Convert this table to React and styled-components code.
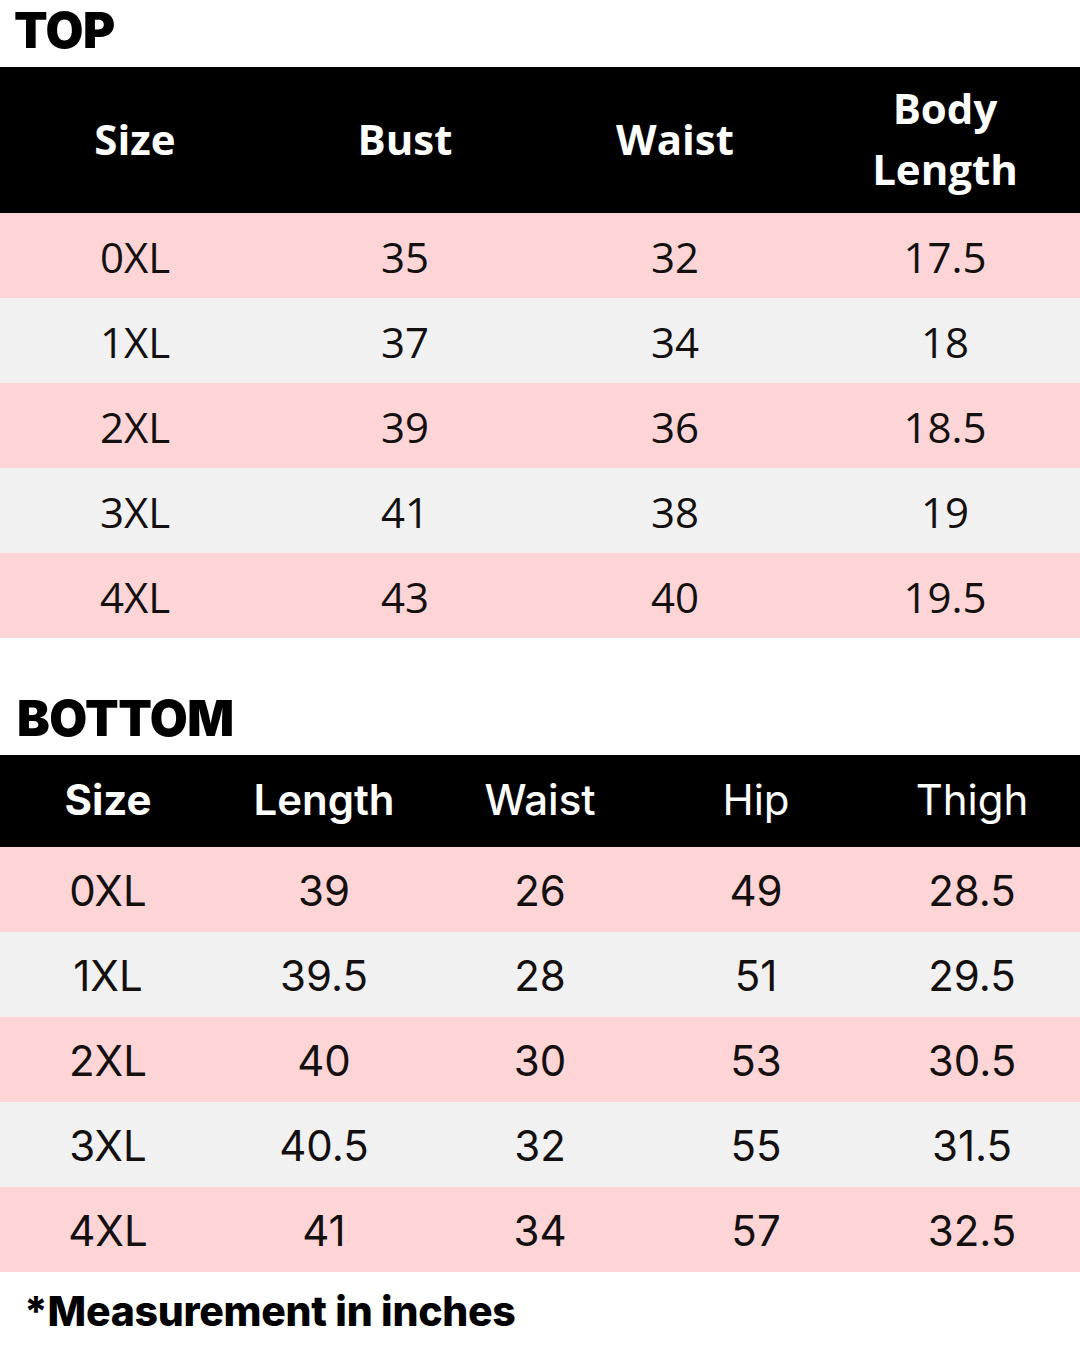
import React from 'react';
import styled, { createGlobalStyle } from 'styled-components';

const GlobalStyle = createGlobalStyle`
  html, body {
    margin: 0;
    padding: 0;
    background: #ffffff;
  }
  body {
    font-family: Inter, "Liberation Sans", sans-serif;
    color: #111111;
  }
`;

const Page = styled.div`
  width: 1080px;
  height: 1350px;
  display: flex;
  flex-direction: column;
  overflow: hidden;
  background: #ffffff;
`;

const Title = styled.h2`
  margin: 0;
  height: ${p => p.$height}px;
  display: flex;
  align-items: ${p => (p.$bottom ? 'flex-end' : 'center')};
  padding: ${p => (p.$bottom ? '0 0 12px 17px' : '0 0 6px 14px')};
  box-sizing: border-box;
  font-family: Inter, "Liberation Sans", sans-serif;
  font-weight: 900;
  font-size: 49px;
  letter-spacing: -0.5px;
  color: #000000;
  line-height: 1;
`;

const Table = styled.div`
  display: grid;
  grid-template-columns: repeat(${p => p.$cols}, 1fr);
  width: 1080px;
`;

const HeadCell = styled.div`
  background: #000000;
  color: #ffffff;
  height: ${p => p.$height}px;
  display: flex;
  align-items: center;
  justify-content: center;
  text-align: center;
  font-family: ${p => p.$font};
  font-weight: ${p => p.$weight || 700};
  font-size: ${p => p.$size}px;
  line-height: 1.45;
  padding-bottom: ${p => p.$lift || 0}px;
  box-sizing: border-box;
`;

const Cell = styled.div`
  background: ${p => (p.$odd ? '#f1f1f1' : '#fdd5d7')};
  height: 85px;
  display: flex;
  align-items: center;
  justify-content: center;
  font-family: ${p => p.$font};
  font-size: ${p => p.$size}px;
  font-weight: 400;
  color: #141010;
  padding-top: 2px;
  box-sizing: border-box;
`;

const Note = styled.div`
  flex: 1;
  display: flex;
  align-items: center;
  padding: 0 0 0 24px;
  font-family: Inter, "Liberation Sans", sans-serif;
  font-weight: 800;
  font-size: 41px;
  letter-spacing: -0.3px;
  color: #000000;
`;

const OPEN = '"Open Sans", "Liberation Sans", sans-serif';
const INTER = 'Inter, "Liberation Sans", sans-serif';

const topHead = ['Size', 'Bust', 'Waist', 'Body\nLength'];
const topRows = [
  ['0XL', '35', '32', '17.5'],
  ['1XL', '37', '34', '18'],
  ['2XL', '39', '36', '18.5'],
  ['3XL', '41', '38', '19'],
  ['4XL', '43', '40', '19.5'],
];

const bottomHead = [
  { label: 'Size', weight: 700 },
  { label: 'Length', weight: 600 },
  { label: 'Waist', weight: 500 },
  { label: 'Hip', weight: 400 },
  { label: 'Thigh', weight: 400 },
];
const bottomRows = [
  ['0XL', '39', '26', '49', '28.5'],
  ['1XL', '39.5', '28', '51', '29.5'],
  ['2XL', '40', '30', '53', '30.5'],
  ['3XL', '40.5', '32', '55', '31.5'],
  ['4XL', '41', '34', '57', '32.5'],
];

export default function App() {
  return (
    <Page>
      <GlobalStyle />
      <Title $height={67}>TOP</Title>
      <Table $cols={4}>
        {topHead.map(h => (
          <HeadCell key={h} $height={146} $font={OPEN} $size={42} $lift={2}>
            <span>
              {h.split('\n').map((line, i) => (
                <React.Fragment key={i}>
                  {i > 0 && <br />}
                  {line}
                </React.Fragment>
              ))}
            </span>
          </HeadCell>
        ))}
        {topRows.map((row, r) =>
          row.map((v, c) => (
            <Cell key={`t${r}-${c}`} $odd={r % 2 === 1} $font={OPEN} $size={42}>
              {v}
            </Cell>
          ))
        )}
      </Table>

      <Title $height={117} $bottom>BOTTOM</Title>
      <Table $cols={5}>
        {bottomHead.map(h => (
          <HeadCell
            key={h.label}
            $height={92}
            $font={INTER}
            $size={42}
            $weight={h.weight}
            $lift={2}
          >
            {h.label}
          </HeadCell>
        ))}
        {bottomRows.map((row, r) =>
          row.map((v, c) => (
            <Cell key={`b${r}-${c}`} $odd={r % 2 === 1} $font={INTER} $size={42}>
              {v}
            </Cell>
          ))
        )}
      </Table>

      <Note>*Measurement in inches</Note>
    </Page>
  );
}
